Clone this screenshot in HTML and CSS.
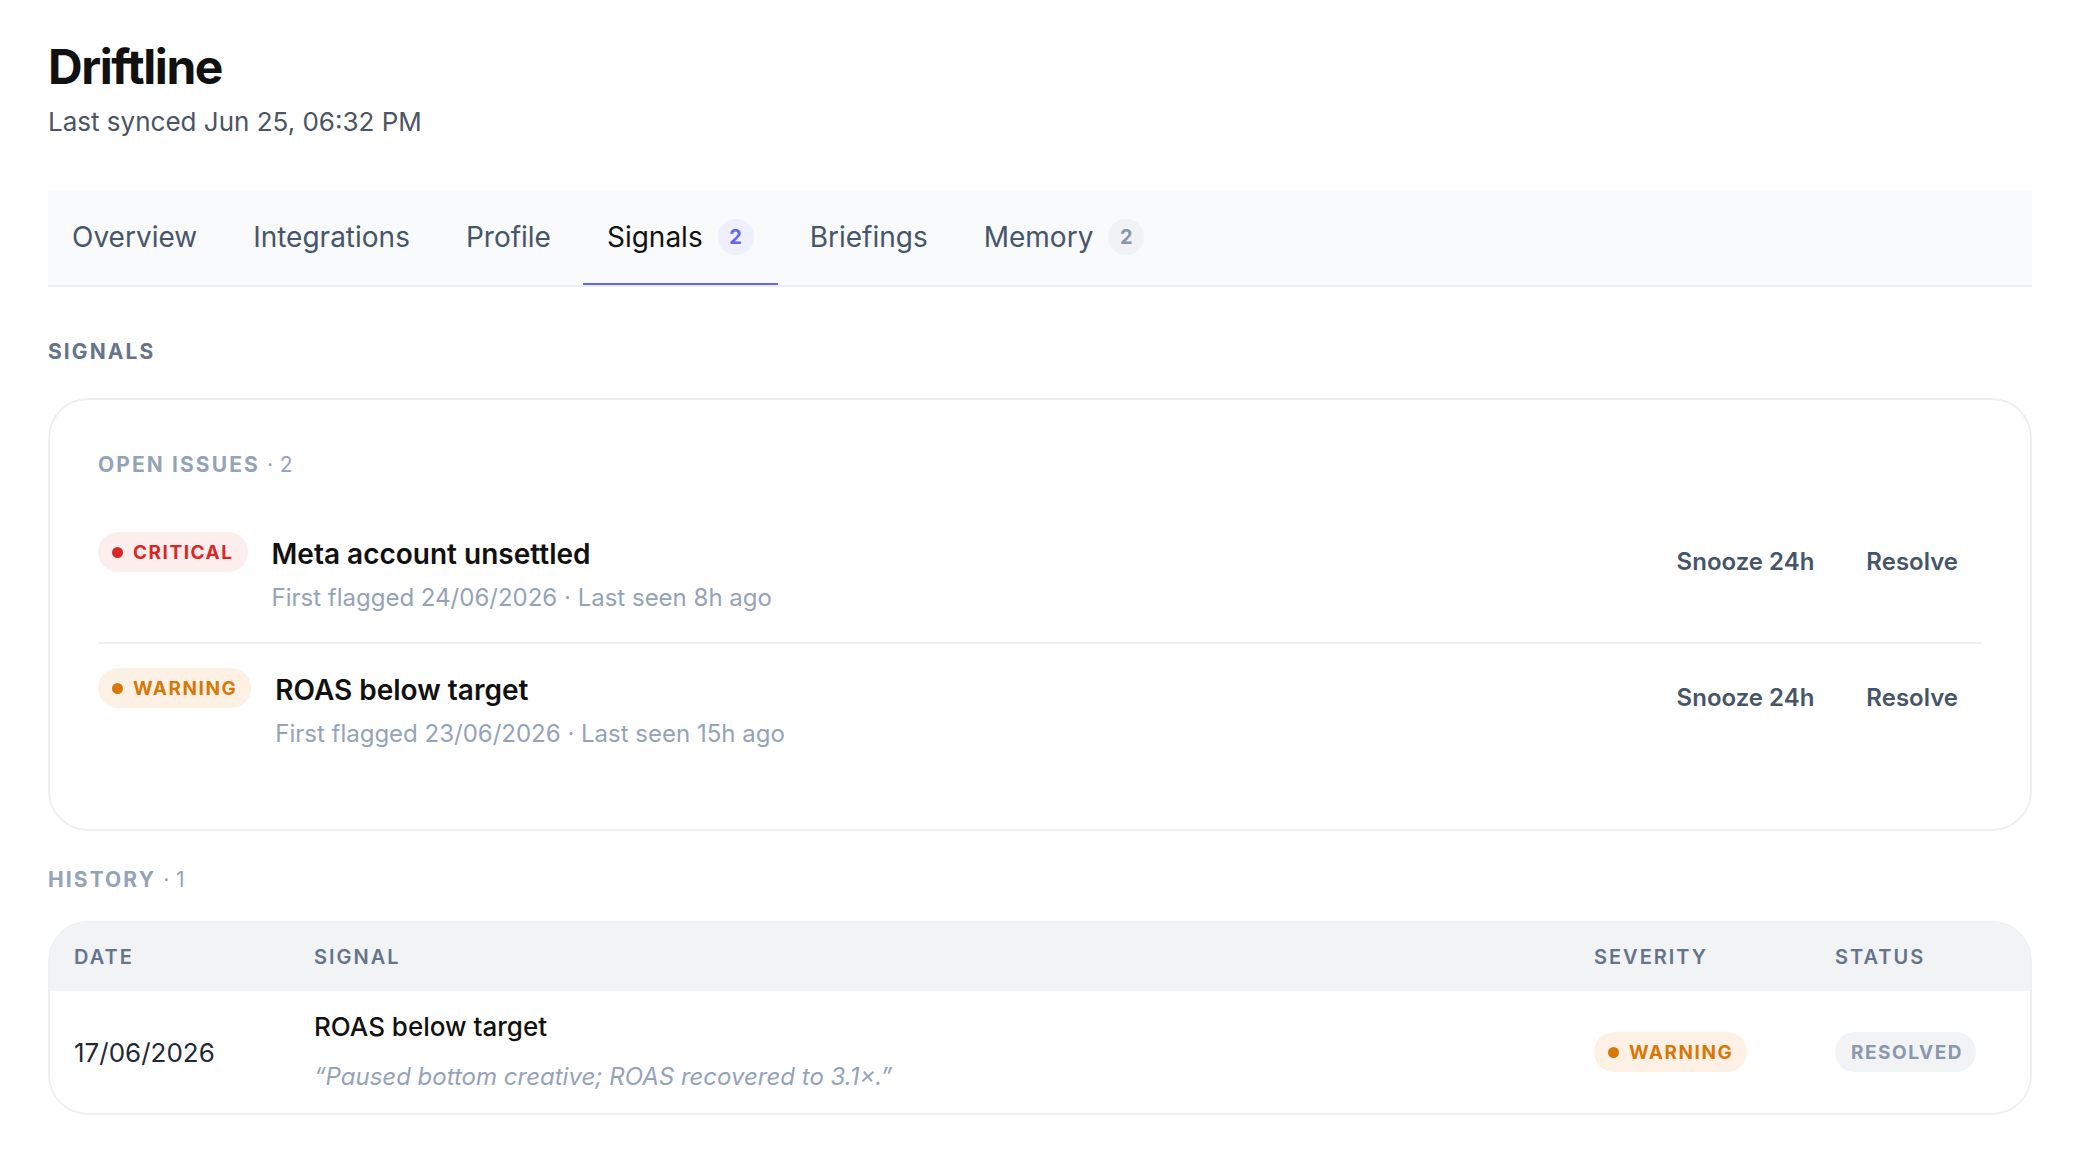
FILE: index.html
```html
<!DOCTYPE html>
<html lang="en">
<head>
  <meta charset="UTF-8">
  <meta name="viewport" content="width=device-width, initial-scale=1.0">
  <title>Driftline · Signals</title>
  <link rel="stylesheet" href="styles.css">
</head>
<body>

  <div class="page">
    <header class="header">
      <h1 class="title">Driftline</h1>
      <div class="synced">Last synced Jun 25, 06:32 PM</div>
    </header>

    <nav class="tabs">
      <a class="tab">Overview</a>
      <a class="tab">Integrations</a>
      <a class="tab">Profile</a>
      <a class="tab active">Signals <span class="count">2</span></a>
      <a class="tab">Briefings</a>
      <a class="tab">Memory <span class="count">2</span></a>
    </nav>

    <h2 class="section-title">Signals</h2>

    <!-- open issues -->
    <div class="card">
      <div class="group-label">Open issues <span class="num">· 2</span></div>

      <div class="issues">
        <div class="issue">
          <span class="badge critical"><i class="dot"></i>Critical</span>
          <div class="issue-body">
            <div class="issue-title">Meta account unsettled</div>
            <div class="issue-meta">First flagged 24/06/2026 · Last seen 8h ago</div>
          </div>
          <div class="actions">
            <button class="action">Snooze 24h</button>
            <button class="action">Resolve</button>
          </div>
        </div>

        <div class="issue">
          <span class="badge warning"><i class="dot"></i>Warning</span>
          <div class="issue-body">
            <div class="issue-title">ROAS below target</div>
            <div class="issue-meta">First flagged 23/06/2026 · Last seen 15h ago</div>
          </div>
          <div class="actions">
            <button class="action">Snooze 24h</button>
            <button class="action">Resolve</button>
          </div>
        </div>
      </div>
    </div>

    <!-- history -->
    <div class="group-label history-label">History <span class="num">· 1</span></div>

    <div class="table">
      <div class="table-head">
        <div class="cell">Date</div>
        <div class="cell">Signal</div>
        <div class="cell">Severity</div>
        <div class="cell">Status</div>
      </div>
      <div class="table-row">
        <div class="cell date">17/06/2026</div>
        <div class="cell">
          <div class="row-title">ROAS below target</div>
          <div class="row-note">“Paused bottom creative; ROAS recovered to 3.1×.”</div>
        </div>
        <div class="cell"><span class="badge warning"><i class="dot"></i>Warning</span></div>
        <div class="cell"><span class="badge resolved">Resolved</span></div>
      </div>
    </div>
  </div>

</body>
</html>
```

FILE: styles.css
```css
body {
  margin: 0;
  background-color: #ffffff;
  font-family: 'Inter', 'Noto Sans', sans-serif;
  color: #111111;
}

.page {
  padding: 38px 48px 40px;
}

.title {
  margin: 0;
  font-size: 48px;
  line-height: 58px;
  font-weight: 700;
  letter-spacing: -0.03em;
  color: #111111;
}

.synced {
  margin-top: 8px;
  font-size: 26px;
  line-height: 36px;
  color: #4b5563;
}

/* tabs */
.tabs {
  display: flex;
  gap: 8px;
  margin-top: 50px;
  background-color: #f8fafc;
  border-bottom: 2px solid #eceef1;
}

.tab {
  display: flex;
  align-items: center;
  height: 93px;
  padding: 0 24px;
  border-bottom: 2px solid transparent;
  font-size: 28px;
  color: #475569;
  cursor: pointer;
}

.tab.active {
  color: #111111;
  border-bottom-color: #6366f1;
}

.count {
  display: inline-flex;
  align-items: center;
  justify-content: center;
  width: 36px;
  height: 36px;
  margin-left: 15px;
  border-radius: 50%;
  background-color: #f0f2f5;
  color: #8a96a8;
  font-size: 20px;
  font-weight: 700;
}

.tab.active .count {
  background-color: #eeefff;
  color: #6366f1;
}

.section-title {
  margin: 51px 0 0;
  font-size: 21px;
  line-height: 28px;
  font-weight: 700;
  letter-spacing: 0.1em;
  text-transform: uppercase;
  color: #64748b;
}

/* open issues card */
.card {
  margin-top: 32px;
  padding: 51px 48px 51px;
  border: 2px solid #eef0f2;
  border-radius: 40px;
}

.group-label {
  font-size: 21px;
  line-height: 28px;
  font-weight: 700;
  letter-spacing: 0.1em;
  text-transform: uppercase;
  color: #94a3b8;
}

.group-label .num {
  font-weight: 400;
  letter-spacing: 0.02em;
}

.issues {
  margin-top: 29px;
}

.issue {
  display: flex;
  align-items: flex-start;
  gap: 24px;
  padding: 24px 0 28px;
  border-bottom: 2px solid #eef0f2;
}

.issue:last-child {
  border-bottom: none;
}

.issue-body {
  flex: 1;
}

.issue-title {
  font-size: 28px;
  line-height: 44px;
  font-weight: 600;
  color: #111111;
}

.issue-meta {
  margin-top: 6px;
  font-size: 24px;
  line-height: 32px;
  color: #94a3b8;
}

.actions {
  display: flex;
  gap: 4px;
  margin-top: 7px;
}

.action {
  height: 44px;
  padding: 0 24px;
  background: none;
  border: none;
  font-family: inherit;
  font-size: 24px;
  font-weight: 600;
  color: #475569;
  cursor: pointer;
}

/* badges */
.badge {
  display: inline-flex;
  align-items: center;
  height: 40px;
  padding: 0 14px;
  border-radius: 20px;
  font-size: 19px;
  font-weight: 700;
  letter-spacing: 0.08em;
  text-transform: uppercase;
  white-space: nowrap;
}

.badge .dot {
  width: 11px;
  height: 11px;
  margin-right: 10px;
  border-radius: 50%;
  background-color: currentColor;
}

.badge.critical {
  background-color: #fdeeee;
  color: #dc2626;
}

.badge.warning {
  background-color: #fdf1e6;
  color: #d97706;
}

.badge.resolved {
  padding: 0 13px 0 16px;
  background-color: #f1f3f5;
  color: #8a98ad;
}

/* history */
.history-label {
  margin-top: 35px;
}

.table {
  margin-top: 27px;
  border: 2px solid #eef0f2;
  border-radius: 40px;
  overflow: hidden;
}

.table-head,
.table-row {
  display: grid;
  grid-template-columns: 240px 1fr 241px 219px;
  align-items: center;
}

.table-head {
  height: 68px;
  background-color: #f2f3f5;
}

.table-head .cell {
  font-size: 20px;
  font-weight: 600;
  letter-spacing: 0.1em;
  text-transform: uppercase;
  color: #64748b;
}

.table-row {
  padding: 20px 0;
}

.cell {
  padding: 0 24px;
}

.date {
  font-size: 26px;
  color: #1f2937;
}

.row-title {
  font-size: 26px;
  line-height: 32px;
  font-weight: 500;
  color: #111111;
}

.row-note {
  margin-top: 18px;
  font-size: 24px;
  line-height: 32px;
  font-style: italic;
  color: #94a3b8;
}
```
